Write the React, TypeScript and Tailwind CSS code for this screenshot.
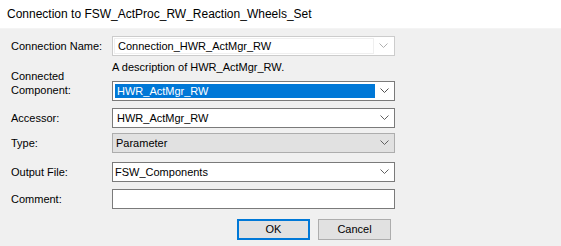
import React from "react";

const font = { fontFamily: '"Liberation Sans", Arial, sans-serif' };

function Chevron({ color }: { color: string }) {
  return (
    <svg width="9" height="6" viewBox="0 0 9 6" className="shrink-0">
      <path d="M0.5 0.5 L4.5 4.5 L8.5 0.5" fill="none" stroke={color} strokeWidth="1" />
    </svg>
  );
}

function Label({ children }: { children: React.ReactNode }) {
  return <div className="w-[101px] shrink-0 text-[11px] leading-[14px] text-black">{children}</div>;
}

export default function App() {
  return (
    <div className="w-[561px] h-[246px] bg-[#f0f0f0] overflow-hidden" style={font}>
      {/* title bar */}
      <div className="h-[29px] bg-white flex items-center pl-[7px] text-[12px] text-black border-b border-[#f4f4f4]">
        Connection to FSW_ActProc_RW_Reaction_Wheels_Set
      </div>

      <div className="pl-[11px] flex flex-col">
        {/* Connection Name */}
        <div className="flex items-center mt-[7px]">
          <Label>Connection Name:</Label>
          <div className="w-[283px] h-[20px] border border-[#cccccc] bg-white flex items-center p-[1px]">
            <div className="flex-1 h-full border border-[#efefef] flex items-center pl-[3px] text-[11px] text-black">
              Connection_HWR_ActMgr_RW
            </div>
            <div className="w-[19px] flex justify-center">
              <Chevron color="#b0b0b0" />
            </div>
          </div>
        </div>

        {/* Connected Component */}
        <div className="flex">
          <div className="flex items-end pb-[4px]">
            <Label>
              Connected
              <br />
              Component:
            </Label>
          </div>
          <div className="flex flex-col">
            <div className="mt-[4px] h-[14px] text-[11px] leading-[14px] text-black">
              A description of HWR_ActMgr_RW.
            </div>
            <div className="mt-[7px] w-[283px] h-[20px] border border-[#7a7a7a] bg-white flex items-center pl-[2px]">
              <div className="w-[260px] h-[14px] bg-[#0078d7] text-white text-[11px] leading-[14px] pl-[2px]">
                HWR_ActMgr_RW
              </div>
              <div className="flex-1 flex justify-center">
                <Chevron color="#505050" />
              </div>
            </div>
          </div>
        </div>

        {/* Accessor */}
        <div className="flex items-center mt-[7px]">
          <Label>Accessor:</Label>
          <div className="w-[283px] h-[20px] border border-[#7a7a7a] bg-white flex items-center pl-[4px] text-[11px] text-black">
            <span className="flex-1">HWR_ActMgr_RW</span>
            <div className="w-[19px] flex justify-center">
              <Chevron color="#606060" />
            </div>
          </div>
        </div>

        {/* Type */}
        <div className="flex items-center mt-[5px]">
          <Label>Type:</Label>
          <div className="w-[283px] h-[20px] border border-[#adadad] bg-[#e1e1e1] flex items-center pl-[3px] text-[11px] text-black">
            <span className="flex-1">Parameter</span>
            <div className="w-[19px] flex justify-center">
              <Chevron color="#606060" />
            </div>
          </div>
        </div>

        {/* Output File */}
        <div className="flex items-center mt-[9px]">
          <Label>Output File:</Label>
          <div className="w-[283px] h-[20px] border border-[#7a7a7a] bg-white flex items-center pl-[2px] text-[11px] text-black">
            <span className="flex-1">FSW_Components</span>
            <div className="w-[19px] flex justify-center">
              <Chevron color="#606060" />
            </div>
          </div>
        </div>

        {/* Comment */}
        <div className="flex items-center mt-[7px]">
          <Label>Comment:</Label>
          <div className="w-[283px] h-[20px] border border-[#7a7a7a] bg-white" />
        </div>

        {/* Buttons */}
        <div className="flex mt-[10px] pl-[226px] gap-[8px]">
          <button className="w-[73px] h-[21px] border-2 border-[#0078d7] bg-[#e1e1e1] text-[11px] text-black">
            OK
          </button>
          <button className="w-[73px] h-[21px] border border-[#adadad] bg-[#e1e1e1] text-[11px] text-black">
            Cancel
          </button>
        </div>
      </div>
    </div>
  );
}
